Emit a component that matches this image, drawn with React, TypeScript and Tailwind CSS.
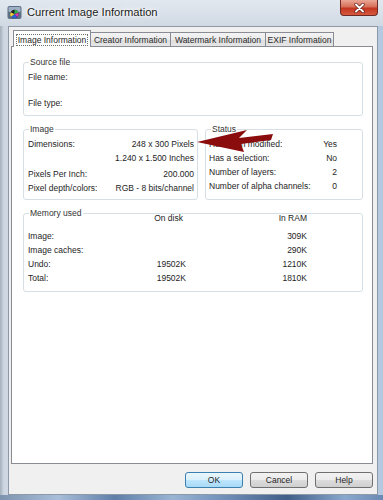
import type { ReactNode } from "react";
import clsx from "clsx";

const tabs = [
  { label: "Image Information", w: "w-[78px]", active: true },
  { label: "Creator Information", w: "w-[81px]" },
  { label: "Watermark Information", w: "w-[96px]" },
  { label: "EXIF Information", w: "w-[69px]" },
];

const imageRows = [
  { label: "Dimensions:", value: "248 x 300 Pixels" },
  { label: "", value: "1.240 x 1.500 Inches" },
  { label: "Pixels Per Inch:", value: "200.000", gap: true },
  { label: "Pixel depth/colors:", value: "RGB - 8 bits/channel" },
];

const statusRows = [
  ["Has been modified:", "Yes"],
  ["Has a selection:", "No"],
  ["Number of layers:", "2"],
  ["Number of alpha channels:", "0"],
];

const memoryRows = [
  ["Image:", "", "309K"],
  ["Image caches:", "", "290K"],
  ["Undo:", "19502K", "1210K"],
  ["Total:", "19502K", "1810K"],
];

function GroupBox({
  title,
  className,
  legendClass,
  children,
}: {
  title: string;
  className?: string;
  legendClass?: string;
  children: ReactNode;
}) {
  return (
    <fieldset className={clsx("min-w-0 rounded-[3px] border border-[#d5dfe5]", className)}>
      <legend className={clsx("px-px leading-[11px] text-[#333]", legendClass)}>{title}</legend>
      {children}
    </fieldset>
  );
}

function AppIcon() {
  return (
    <svg width="15" height="15" viewBox="0 0 15 15">
      <rect x="0.5" y="1" width="14" height="13" rx="2" fill="#5d6f86" />
      <rect x="1.5" y="2" width="12" height="5" rx="1" fill="#9fb0c4" />
      <circle cx="7.5" cy="9" r="4.2" fill="#1d1d2b" />
      <path d="M7.5 9 L7.5 4.8 A4.2 4.2 0 0 1 11.5 7.7 Z" fill="#2fb24a" />
      <path d="M7.5 9 L11.5 7.7 A4.2 4.2 0 0 1 10.2 12.3 Z" fill="#d63aa8" />
      <path d="M7.5 9 L10.2 12.3 A4.2 4.2 0 0 1 4.2 11.8 Z" fill="#2b63d6" />
      <path d="M7.5 9 L4.2 11.8 A4.2 4.2 0 0 1 3.6 7.2 Z" fill="#e8d23a" />
    </svg>
  );
}

function Button({ label, primary }: { label: string; primary?: boolean }) {
  return (
    <button
      type="button"
      className={clsx(
        "flex h-[16px] w-[58px] items-center justify-center rounded-[3px] border text-[8.5px] text-[#1e1e1e]",
        primary
          ? "border-[#3c7fb1] bg-[linear-gradient(#eaf6fd,#d9f0fc_50%,#bee6fd_51%,#a7d9f5)]"
          : "border-[#707070] bg-[linear-gradient(#f2f2f2,#ebebeb_50%,#dddddd_51%,#cfcfcf)]",
      )}
    >
      {label}
    </button>
  );
}

export default function App() {
  return (
    <div className="relative flex h-[500px] w-[383px] flex-col overflow-hidden bg-[linear-gradient(90deg,#a3afbc_0px,#cfd8e2_4px,#d7dfe8_60%,#b4c8df_100%)] font-['Liberation_Sans',Arial,sans-serif] text-[#1e1e1e]">
      {/* title bar */}
      <div className="flex h-[26px] items-start bg-[linear-gradient(180deg,#e2e8ef,#d0d9e3)]">
        <div className="ml-[7px] mt-[5px]">
          <AppIcon />
        </div>
        <span className="ml-[5px] mt-[5px] text-[11.2px] leading-[14px] text-[#1b1b1b] [text-shadow:0_0_8px_#fff,0_0_4px_#fff,0_0_2px_#fff]">
          Current Image Information
        </span>
        <button
          type="button"
          aria-label="Close"
          className="ml-auto mr-[5px] flex h-[16px] w-[38px] items-center justify-center rounded-b-[4px] border border-t-0 border-[#6d2a22] bg-[linear-gradient(#eaa795,#d6705a_45%,#c4351f_55%,#d45a3f)]"
        >
          <svg width="11" height="10" viewBox="0 0 11 10">
            <path d="M2 1.5 L9 8.5 M9 1.5 L2 8.5" stroke="#5b1a12" strokeWidth="3.2" strokeLinecap="round" />
            <path d="M2 1.5 L9 8.5 M9 1.5 L2 8.5" stroke="#fff" strokeWidth="1.9" strokeLinecap="round" />
          </svg>
        </button>
      </div>

      {/* client area */}
      <div className="ml-[8px] mr-[5px] flex flex-1 flex-col border border-[#8e99a7] bg-[#f0f0f0] pl-[2px] pr-[4px] pt-[3px] pb-[6px] text-[8.5px]">
        <div className="flex h-[16px] items-end pl-[2px]">
          {tabs.map((tab) =>
            tab.active ? (
              <div
                key={tab.label}
                className={clsx(
                  "relative z-10 -mb-px flex h-[17px] items-center justify-center border border-b-0 border-[#898c95] bg-white px-[2px] pt-px",
                  tab.w,
                )}
              >
                <span className="flex h-[12px] w-full items-center justify-center border border-dotted border-[#6f6f6f] leading-[10px]">
                  {tab.label}
                </span>
              </div>
            ) : (
              <div
                key={tab.label}
                className={clsx(
                  "-ml-px flex h-[14px] items-center justify-center border border-b-0 border-[#898c95] bg-[linear-gradient(#f3f3f3,#ebebeb_50%,#dedede_51%,#e5e5e5)] leading-[10px] text-[#2a2a2a]",
                  tab.w,
                )}
              >
                {tab.label}
              </div>
            ),
          )}
        </div>

        {/* tab panel */}
        <div className="flex flex-1 flex-col border border-[#898c95] bg-white pl-[11px] pr-[9px] pt-[10px]">
          <GroupBox title="Source file" className="pl-[4px] pb-[5px]" legendClass="ml-px">
            <div className="pt-[2px] leading-[14px]">
              <div>File name:</div>
              <div className="mt-[12px]">File type:</div>
            </div>
          </GroupBox>

          <div className="mt-2 flex gap-[7px]">
            <GroupBox title="Image" className="w-[175px] pl-[4px] pr-[3px] pb-[4px]" legendClass="ml-px">
              <div className="pt-[2px] leading-[14px]">
                {imageRows.map((row) => (
                  <div key={row.value} className={clsx("flex justify-between", row.gap && "mt-[2px]")}>
                    <span>{row.label}</span>
                    <span>{row.value}</span>
                  </div>
                ))}
              </div>
            </GroupBox>

            <GroupBox title="Status" className="flex-1 pl-[3px] pr-[25px]" legendClass="ml-[2px]">
              <div className="pt-[2px] leading-[14px]">
                {statusRows.map(([label, value]) => (
                  <div key={label} className="flex justify-between">
                    <span>{label}</span>
                    <span>{value}</span>
                  </div>
                ))}
              </div>
            </GroupBox>
          </div>

          <GroupBox title="Memory used" className="mt-2 pl-[4px] pb-[6px]" legendClass="ml-px">
            <div className="-mt-[8px] grid grid-cols-[100px_58px_121px] leading-[14px]">
              <span />
              <span className="pr-[3px] text-right">On disk</span>
              <span className="text-right">In RAM</span>
            </div>
            <div className="mt-[4px] grid grid-cols-[100px_58px_121px] leading-[14px]">
              {memoryRows.map(([label, disk, ram]) => (
                <div key={label} className="contents">
                  <span>{label}</span>
                  <span className="text-right">{disk}</span>
                  <span className="text-right">{ram}</span>
                </div>
              ))}
            </div>
          </GroupBox>
        </div>

        <div className="mt-[8px] flex justify-end gap-[7px]">
          <Button label="OK" primary />
          <Button label="Cancel" />
          <Button label="Help" />
        </div>
      </div>

      {/* bottom glass edge */}
      <div className="h-[5px] bg-[linear-gradient(90deg,#7d93ad,#a9bfd9_15%,#5f7fa8_30%,#9ab4d3_45%,#6c8cb6_60%,#3f5f88_75%,#8aa8cc_90%,#6a89b3)]" />

      {/* red arrow overlay */}
      <svg
        className="pointer-events-none absolute inset-0"
        width="383"
        height="500"
        viewBox="0 0 383 500"
      >
        <polygon
          points="197,142 247,130 239,138 273,134 271,140 241,144 244,152"
          fill="#8a0c0c"
        />
      </svg>
    </div>
  );
}
